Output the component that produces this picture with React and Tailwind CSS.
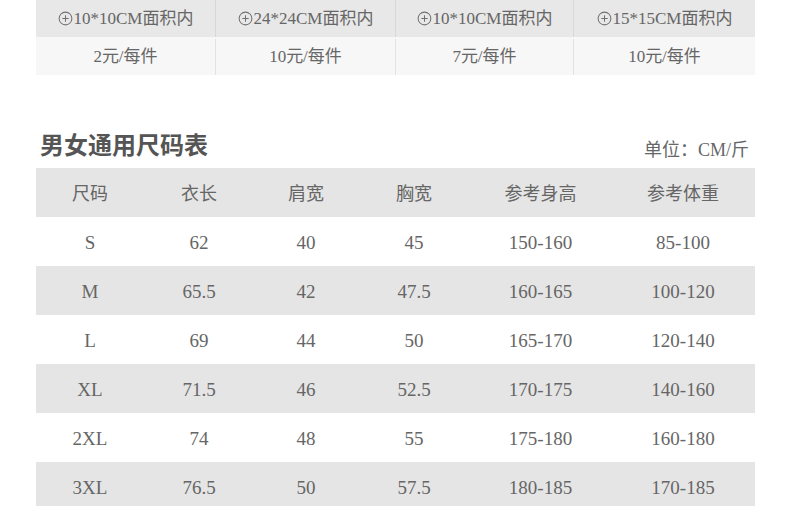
const fees = [
  { area: '10*10CM面积内', price: '2元/每件', w: 'w-[179px]' },
  { area: '24*24CM面积内', price: '10元/每件', w: 'w-[180px]' },
  { area: '10*10CM面积内', price: '7元/每件', w: 'w-[178px]' },
  { area: '15*15CM面积内', price: '10元/每件', w: 'w-[182px]' },
];

const cols = ['w-[108px]', 'w-[110px]', 'w-[104px]', 'w-[112px]', 'w-[141px]', 'w-[144px]'];
const head = ['尺码', '衣长', '肩宽', '胸宽', '参考身高', '参考体重'];
const rows = [
  ['S', '62', '40', '45', '150-160', '85-100'],
  ['M', '65.5', '42', '47.5', '160-165', '100-120'],
  ['L', '69', '44', '50', '165-170', '120-140'],
  ['XL', '71.5', '46', '52.5', '170-175', '140-160'],
  ['2XL', '74', '48', '55', '175-180', '160-180'],
  ['3XL', '76.5', '50', '57.5', '180-185', '170-185'],
];

function PlusCircle() {
  return (
    <svg width="15" height="15" viewBox="0 0 16 16" className="mr-[1px] shrink-0">
      <circle cx="8" cy="8" r="6.8" fill="none" stroke="#707070" strokeWidth="1.1" />
      <path d="M8 4.6v6.8M4.6 8h6.8" stroke="#707070" strokeWidth="1.1" />
    </svg>
  );
}

export default function App() {
  return (
    <div className="w-[790px] h-[506px] overflow-hidden bg-white text-[#666] font-['Liberation_Serif','Noto_Sans_CJK_SC',serif]">
      <div className="ml-[36px] w-[719px]">
        {/* print fee table */}
        <div className="flex bg-[#e8e8e8] h-[37px]">
          {fees.map((f, i) => (
            <div
              key={i}
              className={`${f.w} flex items-center justify-center text-[17px] ${i > 0 ? 'border-l border-[#d8d8d8]' : ''}`}
            >
              <PlusCircle />
              {f.area}
            </div>
          ))}
        </div>
        <div className="flex bg-[#f7f7f7] h-[38px] pt-[2px]">
          {fees.map((f, i) => (
            <div
              key={i}
              className={`${f.w} flex items-center justify-center text-[17px] ${i > 0 ? 'border-l border-[#e2e2e2]' : ''}`}
            >
              {f.price}
            </div>
          ))}
        </div>

        {/* size chart */}
        <div className="mt-[55px] flex items-end justify-between h-[38px] pb-[10px]">
          <h2 className="ml-[4px] text-[24px] font-bold text-[#555] leading-none">男女通用尺码表</h2>
          <span className="mr-[6px] text-[18px] leading-none mb-[-1px]">单位：CM/斤</span>
        </div>
        <div className="flex bg-[#e5e5e5] h-[49px] text-[18px] pt-[4px]">
          {head.map((h, i) => (
            <div key={i} className={`${cols[i]} flex items-center justify-center`}>
              {h}
            </div>
          ))}
        </div>
        {rows.map((r, ri) => (
          <div key={ri} className={`flex h-[49px] text-[19px] pt-[4px] ${ri % 2 ? 'bg-[#e5e5e5]' : 'bg-white'}`}>
            {r.map((c, i) => (
              <div key={i} className={`${cols[i]} flex items-center justify-center`}>
                {c}
              </div>
            ))}
          </div>
        ))}
      </div>
    </div>
  );
}
